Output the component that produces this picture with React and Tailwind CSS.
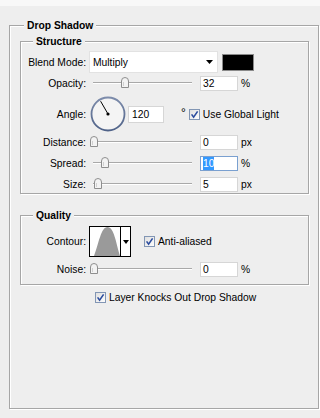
import React from 'react';

function GroupBox({ title, className, titleClass, children }) {
  return (
    <div className={`relative border border-[#a6a6a6] shadow-[inset_1px_1px_0_#ffffff,1px_1px_0_#ffffff] ${className}`}>
      <span className={`absolute -top-[7px] px-[3px] bg-[#eeeeee] font-bold leading-[13px] ${titleClass}`}>
        {title}
      </span>
      {children}
    </div>
  );
}

function Label({ children }) {
  return <span className="w-[65px] shrink-0 text-right">{children}</span>;
}

function Checkbox() {
  return (
    <svg width="11" height="11" viewBox="0 0 11 11" className="shrink-0">
      <defs>
        <linearGradient id="cbg" x1="0" y1="0" x2="1" y2="1">
          <stop offset="0" stopColor="#dedede" />
          <stop offset="1" stopColor="#ffffff" />
        </linearGradient>
      </defs>
      <rect x="0.5" y="0.5" width="10" height="10" fill="url(#cbg)" stroke="#8296b4" />
      <path d="M2.6 5.4 L4.6 8.2 L8.6 2.4" fill="none" stroke="#2b4c9e" strokeWidth="1.6" />
    </svg>
  );
}

// track runs 5px..104px inside the 108px box, thumbClass places the thumb
function Slider({ thumbClass }) {
  return (
    <div className="relative w-[108px] h-[16px] ml-[2px] shrink-0">
      <div className="absolute left-[5px] right-[4px] top-[7px] h-px bg-[#a9a9a9] shadow-[0_1px_0_#ffffff]" />
      <svg width="8" height="11" viewBox="0 0 8 11" className={`absolute top-[2px] ${thumbClass}`}>
        <path d="M0.5 10.5 V4 Q0.5 0.5 4 0.5 Q7.5 0.5 7.5 4 V10.5 Z" fill="#f3f3f3" stroke="#8e8e8e" />
        <path d="M2.5 5 V9" stroke="#d0d0d0" />
      </svg>
    </div>
  );
}

function NumField({ value, width = 'w-[38px]', focused }) {
  return (
    <div
      className={`${width} h-[15px] bg-white border ${
        focused ? 'border-[#7aa0d0]' : 'border-[#d6d6d6]'
      } pl-[2px] flex items-center shrink-0`}
    >
      {focused ? <span className="bg-[#3399ff] text-white">{value}</span> : value}
    </div>
  );
}

function SliderRow({ label, thumbClass, value, unit, focused, className }) {
  return (
    <div className={`flex items-center h-[16px] ${className}`}>
      <Label>{label}</Label>
      <Slider thumbClass={thumbClass} />
      <div className="ml-[4px]">
        <NumField value={value} focused={focused} />
      </div>
      <span className="ml-[3px]">{unit}</span>
    </div>
  );
}

export default function App() {
  return (
    <div className="w-[320px] h-[418px] overflow-hidden bg-[#eeeeee] text-black text-[10.3px] leading-[13px] font-['Liberation_Sans',Arial,sans-serif]">
      <div className="h-[6px] bg-[#f8f8f8]" />

      <GroupBox title="Drop Shadow" className="mt-[19px] ml-[9px] w-[310px] h-[384px]" titleClass="left-[14px]">
        {/* Structure */}
        <GroupBox title="Structure" className="mt-[15px] ml-[10px] w-[289px] h-[153px] pt-[9px]" titleClass="left-[12px]">
          <div className="flex items-center h-[22px]">
            <Label>Blend Mode:</Label>
            <div className="ml-[3px] w-[129px] h-[22px] bg-white border border-[#e2e2e2] flex items-center pl-[3px] pr-[4px]">
              <span className="flex-1">Multiply</span>
              <svg width="7" height="4" viewBox="0 0 7 4">
                <path d="M0 0 H7 L3.5 4 Z" fill="#000" />
              </svg>
            </div>
            <div className="ml-[4px] w-[32px] h-[17px] bg-black border border-[#8a8a8a]" />
          </div>

          <SliderRow className="mt-[2px]" label="Opacity:" thumbClass="left-[33px]" value="32" unit="%" />

          <div className="flex items-center h-[36px] mt-[5px]">
            <Label>Angle:</Label>
            <svg width="36" height="36" viewBox="0 0 36 36" className="ml-[4px] shrink-0">
              <defs>
                <linearGradient id="dial" x1="0" y1="0" x2="0" y2="1">
                  <stop offset="0" stopColor="#7d8cab" />
                  <stop offset="1" stopColor="#4f6288" />
                </linearGradient>
              </defs>
              <circle cx="18" cy="18" r="16.5" fill="#f4f4f4" stroke="url(#dial)" strokeWidth="1.8" />
              <line x1="18" y1="18" x2="10.6" y2="5.2" stroke="#000" strokeWidth="1" />
              <circle cx="18" cy="18" r="1.6" fill="#000" />
            </svg>
            <div className="ml-[2px] w-[36px] h-[17px] bg-white border border-[#d6d6d6] pl-[3px] flex items-center">120</div>
            <span className="ml-[17px] -mt-[1px] text-[12px]">°</span>
            <div className="ml-[3px] flex items-center">
              <Checkbox />
              <span className="ml-[3px]">Use Global Light</span>
            </div>
          </div>

          <SliderRow className="mt-[2px]" label="Distance:" thumbClass="left-[2px]" value="0" unit="px" />
          <SliderRow className="mt-[5px]" label="Spread:" thumbClass="left-[13px]" value="10" unit="%" focused />
          <SliderRow className="mt-[5px]" label="Size:" thumbClass="left-[6px]" value="5" unit="px" />
        </GroupBox>

        {/* Quality */}
        <GroupBox title="Quality" className="mt-[21px] ml-[10px] w-[289px] h-[70px] pt-[10px]" titleClass="left-[12px]">
          <div className="flex items-center h-[31px]">
            <Label>Contour:</Label>
            <div className="ml-[3px] w-[42px] h-[31px] border border-black bg-white flex shrink-0">
              <svg width="30" height="29" viewBox="0 0 30 29" className="shrink-0">
                <path d="M4 29 C9 16 11 0 17.5 0 C24 0 26 16 30 29 Z" fill="#9a9a9a" />
              </svg>
              <div className="w-px bg-black" />
              <div className="flex-1 flex items-center justify-center">
                <svg width="6" height="4" viewBox="0 0 6 4">
                  <path d="M0 0 H6 L3 4 Z" fill="#000" />
                </svg>
              </div>
            </div>
            <div className="ml-[13px] flex items-center">
              <Checkbox />
              <span className="ml-[3px]">Anti-aliased</span>
            </div>
          </div>

          <SliderRow className="mt-[4px]" label="Noise:" thumbClass="left-[2px]" value="0" unit="%" />
        </GroupBox>

        <div className="mt-[7px] ml-[85px] flex items-center h-[11px]">
          <Checkbox />
          <span className="ml-[3px]">Layer Knocks Out Drop Shadow</span>
        </div>
      </GroupBox>
    </div>
  );
}
